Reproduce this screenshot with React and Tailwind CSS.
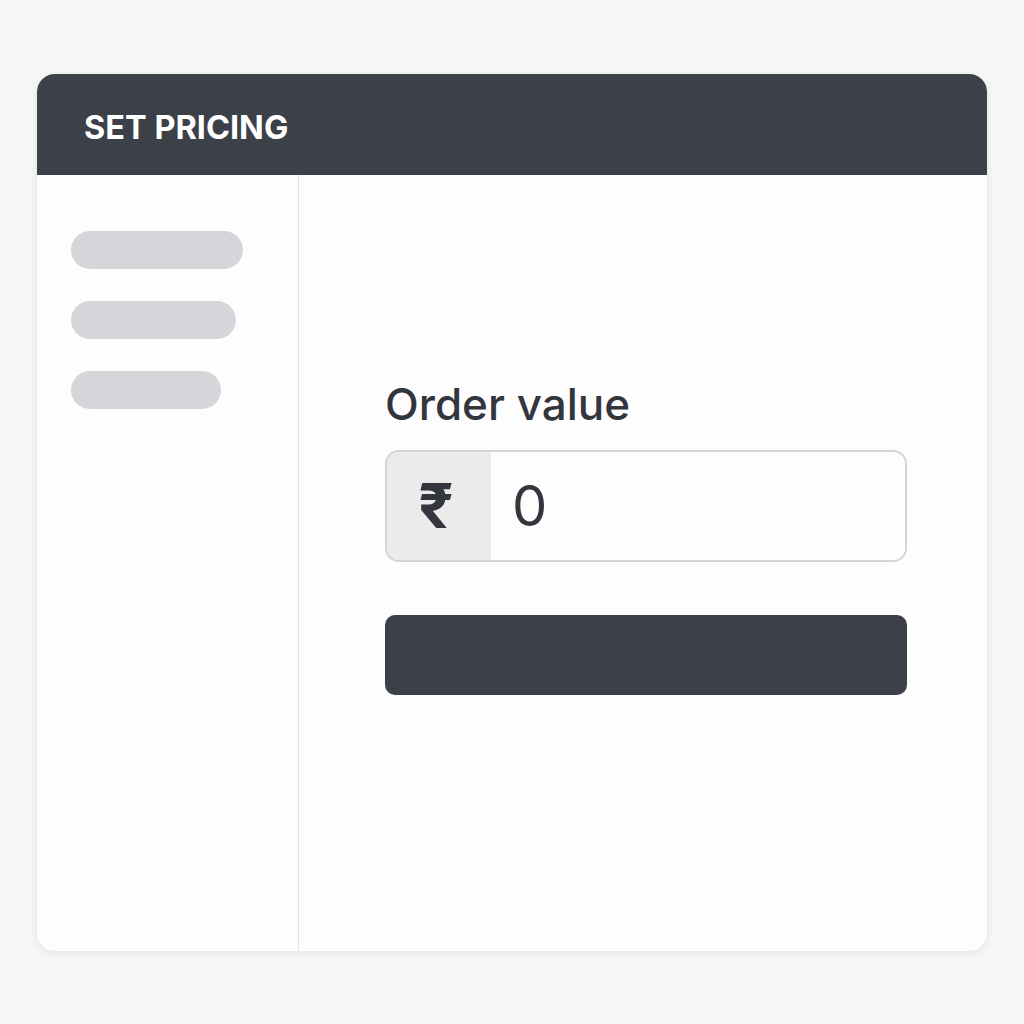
export default function App() {
  return (
    <div className="w-[1024px] h-[1024px] bg-[#f6f6f6] pt-[74px] pl-[37px]" style={{ fontFamily: "Inter, 'Noto Sans', sans-serif" }}>
      <div className="w-[950px] h-[877px] bg-[#fdfdfd] rounded-[18px] shadow-[0_2px_8px_rgba(0,0,0,0.08)] overflow-hidden flex flex-col">
        <div className="h-[101px] shrink-0 bg-[#3c4049] flex items-center pl-[47px] pt-[7px]">
          <span className="text-white font-bold text-[32.5px] leading-none">SET PRICING</span>
        </div>
        <div className="flex flex-1">
          <div className="w-[262px] border-r border-[#e3e3e3] pt-[56px] pl-[34px] flex flex-col gap-[32px]">
            <div className="h-[38px] w-[172px] rounded-full bg-[#d5d6d9]" />
            <div className="h-[38px] w-[165px] rounded-full bg-[#d5d6d9]" />
            <div className="h-[38px] w-[150px] rounded-full bg-[#d5d6d9]" />
          </div>
          <div className="flex-1 pl-[86px] pt-[207px]">
            <div className="text-[44px] font-medium text-[#33363d] leading-none">Order value</div>
            <div className="mt-[24px] w-[522px] h-[112px] border-2 border-[#d4d4d4] rounded-[14px] overflow-hidden flex">
              <div className="w-[104px] bg-[#ebebeb] flex items-center justify-center text-[62px] font-bold text-[#33363d] leading-none pr-[6px]">₹</div>
              <div className="flex-1 bg-[#fdfdfd] flex items-center pl-[21px] text-[56px] text-[#33363d] leading-none">0</div>
            </div>
            <div className="mt-[53px] w-[522px] h-[80px] rounded-[10px] bg-[#3d4049]" />
          </div>
        </div>
      </div>
    </div>
  );
}
